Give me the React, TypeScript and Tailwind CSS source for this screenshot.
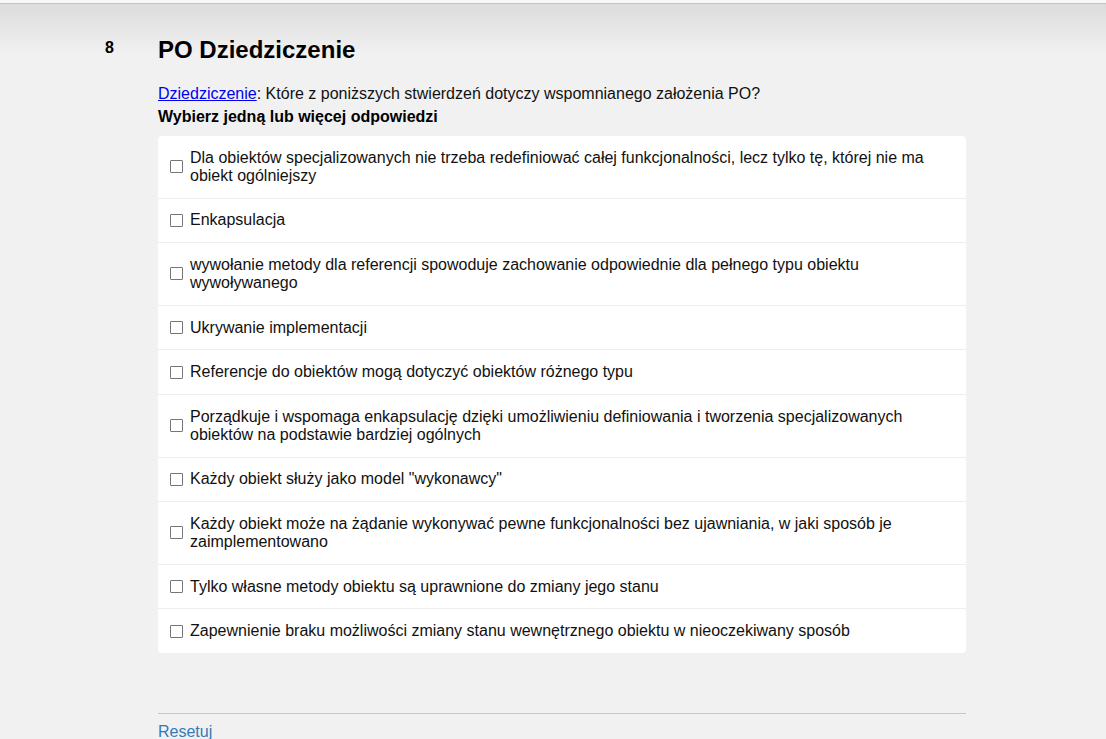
import React from "react";

const options = [
  "Dla obiektów specjalizowanych nie trzeba redefiniować całej funkcjonalności, lecz tylko tę, której nie ma obiekt ogólniejszy",
  "Enkapsulacja",
  "wywołanie metody dla referencji spowoduje zachowanie odpowiednie dla pełnego typu obiektu wywoływanego",
  "Ukrywanie implementacji",
  "Referencje do obiektów mogą dotyczyć obiektów różnego typu",
  "Porządkuje i wspomaga enkapsulację dzięki umożliwieniu definiowania i tworzenia specjalizowanych obiektów na podstawie bardziej ogólnych",
  "Każdy obiekt służy jako model \"wykonawcy\"",
  "Każdy obiekt może na żądanie wykonywać pewne funkcjonalności bez ujawniania, w jaki sposób je zaimplementowano",
  "Tylko własne metody obiektu są uprawnione do zmiany jego stanu",
  "Zapewnienie braku możliwości zmiany stanu wewnętrznego obiektu w nieoczekiwany sposób",
];

export default function App() {
  return (
    <div
      className="min-h-[739px] bg-[#f1f1f1] text-black overflow-hidden"
      style={{ fontFamily: '"Liberation Sans", Arial, sans-serif' }}
    >
      <div className="h-[3px] bg-[#f7f7f7]" />
      <div className="h-px bg-[#c4c4c4]" />
      <div className="bg-gradient-to-b from-[#dcdcdc] to-[#f1f1f1] h-[50px] -mb-[50px]" />
      <div className="flex pt-[32px]">
        <div className="w-[158px] shrink-0 flex justify-start pl-[105px] pt-[3px]">
          <span className="text-[16px] font-bold leading-[18px]">8</span>
        </div>
        <div className="w-[808px]">
          <h1 className="text-[24px] font-bold leading-[28px]">PO Dziedziczenie</h1>
          <p className="mt-[21px] text-[16px] leading-[18px] text-[#111]">
            <a href="#" className="text-[#0000ee] underline">Dziedziczenie</a>: Które z poniższych stwierdzeń dotyczy wspomnianego założenia PO?
          </p>
          <p className="mt-[5px] text-[16px] font-bold leading-[18px]">Wybierz jedną lub więcej odpowiedzi</p>
          <div className="mt-[10px] bg-white rounded-[4px]">
            {options.map((o, i) => (
              <div
                key={i}
                className={`flex items-center pl-[12px] pr-[40px] py-[12.8px] ${i > 0 ? "border-t border-[#eeeeee]" : ""}`}
              >
                <span className="w-[13px] h-[13px] border border-[#767676] rounded-[1px] shrink-0 bg-white" />
                <span className="ml-[7px] text-[16px] leading-[18px] text-[#111]">{o}</span>
              </div>
            ))}
          </div>
          <div className="mt-[60px] border-t border-[#c8c8c8] pt-[6px]">
            <a href="#" className="text-[16px] leading-[18px] text-[#337ab7]">Resetuj</a>
          </div>
        </div>
      </div>
    </div>
  );
}
